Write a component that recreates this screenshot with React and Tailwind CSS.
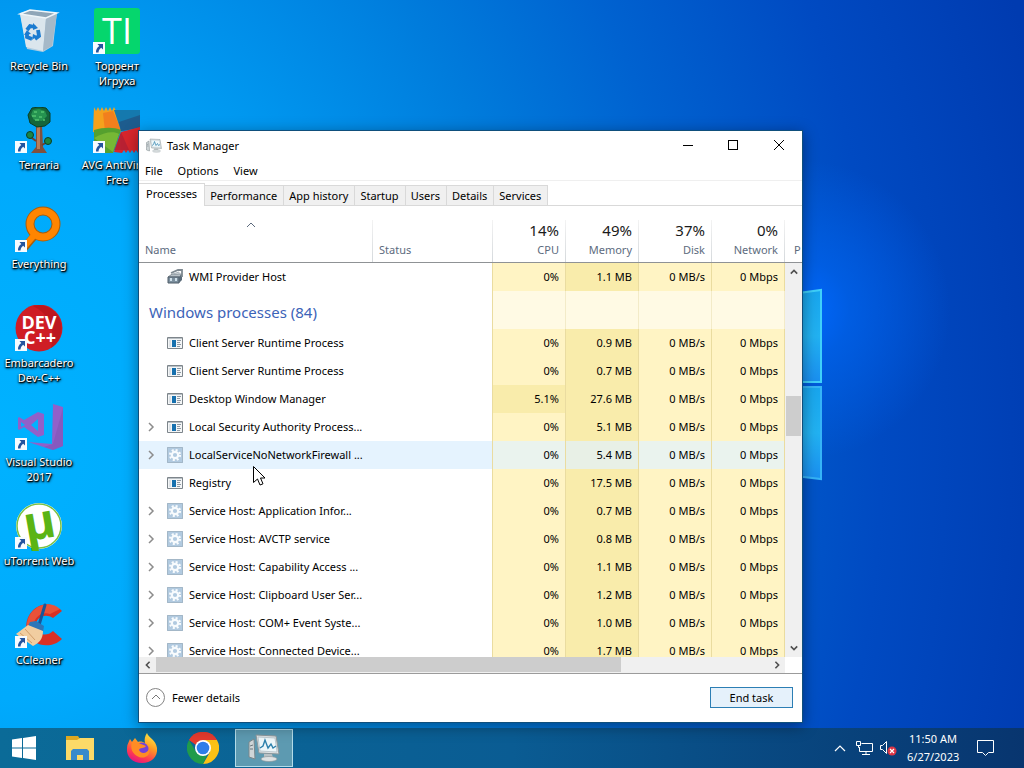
import { useState } from 'react';
import clsx from 'clsx';

const tabs = ['Processes', 'Performance', 'App history', 'Startup', 'Users', 'Details', 'Services'];

const processes = [
  { name: 'Client Server Runtime Process', icon: 'app', cpu: '0%', memory: '0.9 MB' },
  { name: 'Client Server Runtime Process', icon: 'app', cpu: '0%', memory: '0.7 MB' },
  { name: 'Desktop Window Manager', icon: 'app', cpu: '5.1%', memory: '27.6 MB', busy: true },
  { name: 'Local Security Authority Process...', icon: 'app', cpu: '0%', memory: '5.1 MB', group: true },
  { name: 'LocalServiceNoNetworkFirewall ...', icon: 'gear', cpu: '0%', memory: '5.4 MB', group: true, active: true },
  { name: 'Registry', icon: 'app', cpu: '0%', memory: '17.5 MB' },
  { name: 'Service Host: Application Infor...', icon: 'gear', cpu: '0%', memory: '0.7 MB', group: true },
  { name: 'Service Host: AVCTP service', icon: 'gear', cpu: '0%', memory: '0.8 MB', group: true },
  { name: 'Service Host: Capability Access ...', icon: 'gear', cpu: '0%', memory: '1.1 MB', group: true },
  { name: 'Service Host: Clipboard User Ser...', icon: 'gear', cpu: '0%', memory: '1.2 MB', group: true },
  { name: 'Service Host: COM+ Event Syste...', icon: 'gear', cpu: '0%', memory: '1.0 MB', group: true },
  { name: 'Service Host: Connected Device...', icon: 'gear', cpu: '0%', memory: '1.7 MB', group: true },
];

const usage = [
  { label: 'CPU', value: '14%' },
  { label: 'Memory', value: '49%' },
  { label: 'Disk', value: '37%' },
  { label: 'Network', value: '0%' },
];

/* ---------- small glyphs ---------- */

const Chevron = ({ d, className, width = 2 }) => (
  <svg viewBox="0 0 10 10" className={className} fill="none" stroke="currentColor" strokeWidth={width}>
    <path d={d} />
  </svg>
);

const UP = 'M1 7 5 3l4 4';
const DOWN = 'M1 3l4 4 4-4';
const LEFT = 'M7 1 3 5l4 4';
const RIGHT = 'M3 1l4 4-4 4';

const AppIcon = () => (
  <svg viewBox="0 0 16 12" className="h-3 w-4 shrink-0">
    <path d="M.5.5h15v11H.5z" fill="#f4f6f7" stroke="#7d858b" />
    <path d="M1 1h14v1H1z" fill="#b9c0c5" />
    <path d="M5 3h4v7H5z" fill="#1670ae" />
    <path d="M2 3h2v7H2z" fill="#dde2e6" />
    <path d="M10 3.500h4M10 5.500h3M10 7.500h4M10 9.500h3" stroke="#8e99a3" />
  </svg>
);

const GearIcon = () => (
  <svg viewBox="0 0 16 16" className="size-4 shrink-0">
    <path d="M0 0h16v16H0z" fill="#b1cae0" />
    <path d="M.5.5h15v15H.5z" fill="none" stroke="#a3b7c7" />
    <circle cx="8" cy="8" r="5" fill="none" stroke="#f8fbfd" strokeWidth="2.2" strokeDasharray="2 1.93" />
    <circle cx="8" cy="8" r="3.2" fill="#b1cae0" stroke="#f8fbfd" strokeWidth="2.2" />
  </svg>
);

const WmiIcon = () => (
  <svg viewBox="0 0 16 16" className="size-4 shrink-0">
    <path d="M1 8 5 5h10l-3 3z" fill="#b7c0c6" stroke="#66717a" strokeWidth=".7" />
    <path d="M1 8h11v6H1z" fill="#7c8f9e" stroke="#4f5d69" />
    <path d="M12 8l3-3v6l-3 3z" fill="#596a78" />
    <path d="M4 4 11 1h4v7" fill="none" stroke="#7e8991" strokeWidth="1.800" />
    <path d="M6 5l6-2v3" fill="none" stroke="#a9b4bc" />
    <path d="M3 9h2v3H3zM8 9h2v3H8z" fill="#cfe0ea" />
  </svg>
);

const MonitorIcon = ({ className }) => (
  <svg viewBox="0 0 32 28" className={className}>
    <path d="M1 8l5-3 1 20-6-2z" fill="#cfd6d8" stroke="#7b878b" />
    <path d="M2 12l3-1M2 15h3" stroke="#6b777c" />
    <path d="M16 20h8l1 4h-9z" fill="#b9c2c5" />
    <ellipse cx="21" cy="25" rx="8" ry="2.5" fill="#dde2e3" stroke="#8f999d" strokeWidth=".7" />
    <path d="M8 1 28 2l3 18-20-1z" fill="#dfe3e4" stroke="#8b979b" />
    <path d="M10 3l17 1 2 14-17-1z" fill="#edf7fa" stroke="#9fb0b8" strokeWidth=".6" />
    <path d="M12 14l3-2 2-6 3 8 3-4 2 4 3-2" fill="none" stroke="#2c80ac" strokeWidth="1.4" />
  </svg>
);

const ShortcutArrow = () => (
  <svg viewBox="0 0 12 12" className="absolute bottom-[2px] left-0 size-3">
    <path d="M0 0h12v12H0z" fill="#f7fbff" />
    <path d="M4.500 2H10v5.500L8.200 5.800C6.500 7 5.700 8.300 5.500 10.500H3C2.700 8 4 5.300 6.300 3.900z" fill="#24549f" />
  </svg>
);

/* ---------- desktop icon drawings ---------- */

const RecycleBin = () => (
  <svg viewBox="0 0 48 48" className="size-12">
    <path d="M5 5 15 2l27 3-4 33-10 6-16-3z" fill="#c3d3df" opacity=".9" />
    <path d="M5 6l26 4-3 33-17-4z" fill="#dbe6ed" />
    <path d="M31 10 42 5l-5 33-9 5z" fill="#a6b9c8" />
    <path d="M5 6 15 2l27 3-11 5z" fill="#8fa6b8" stroke="#eef5f9" strokeWidth="1.5" />
    <g fill="none" stroke="#1b7bd0" strokeWidth="3.800">
      <path d="M12 22l3-4 5 1" />
      <path d="M23 22l1 6-4 3" />
      <path d="M17 31l-5-2 0-4" />
    </g>
    <path d="M18 15l5 5-5 2zM22 28l-5 4 1-6zM9 27l3-5 4 4z" fill="#1b7bd0" />
  </svg>
);

const TorrentIcon = () => (
  <svg viewBox="0 0 48 48" className="size-12">
    <rect x="1" width="46" height="46" rx="3" fill="#05d66d" />
    <text x="24" y="36" textAnchor="middle" fontFamily="Open Sans" fontSize="36" fill="#fff">TI</text>
  </svg>
);

const TerrariaIcon = () => (
  <svg viewBox="0 0 48 48" className="size-12">
    <path d="M21 18h6l1 22 4 6H16l5-6z" fill="#81503c" />
    <path d="M22 20h3v22h-3z" fill="#b87d5a" />
    <path d="M21 34l-8-6M27 38l7-4" stroke="#6b4030" strokeWidth="2" />
    <path d="M17 1l7-1 7 1 4 5v9l-5 4-8 1-7-4-2-8z" fill="#14663a" stroke="#0b3e24" />
    <path d="M18 3l6-1 6 2 2 5-5 5-8-1-3-5z" fill="#259350" />
    <path d="M19 5h3M26 5h3M17 9h4M24 10h3M20 13h4M28 13h2" stroke="#52c46f" strokeWidth="1.500" />
    <circle cx="15" cy="28" r="3.500" fill="#1b8445" stroke="#0b3e24" />
    <circle cx="33" cy="34" r="3.500" fill="#1b8445" stroke="#0b3e24" />
  </svg>
);

const AvgIcon = () => (
  <svg viewBox="0 0 48 48" className="size-12">
    <path d="M1 0l2 4 2-4 2 4 2-4 2 4 2-4 2 4 2-4 2 4 2-4 2 4 7 19-9 5-21-3z" fill="#f4a11d" />
    <path d="M10 6l10-2 8 19-16 2z" fill="#f0641e" opacity=".55" />
    <path d="M1 23c10-3 20-3 27 0l-8 23H1z" fill="#55a02e" />
    <path d="M1 31c10-6 20-7 25-4l-6 18z" fill="#8cc63a" opacity=".6" />
    <path d="M21 3h26v18l-19 3z" fill="#1579ae" />
    <path d="M26 15 47 8v13l-19 3z" fill="#1d5c8e" />
    <path d="M28 25l19-5v23l-2 3-2-3-2 3-2-3-2 3-2-3-2 3-2-3-2 3-8-1z" fill="#d8262c" />
    <path d="M28 25l8 18H21z" fill="#a51e38" opacity=".6" />
  </svg>
);

const EverythingIcon = () => (
  <svg viewBox="0 0 48 48" className="size-12">
    <path d="M21 28 9 42" stroke="#a95d0b" strokeWidth="8" />
    <circle cx="28" cy="18" r="13" fill="none" stroke="#a95d0b" strokeWidth="9" />
    <path d="M21 27 9 41" stroke="#ff8500" strokeWidth="6" />
    <circle cx="28" cy="18" r="13" fill="none" stroke="#ff8500" strokeWidth="7" />
  </svg>
);

const DevCppIcon = () => (
  <svg viewBox="0 0 48 48" className="size-12">
    <circle cx="24" cy="23" r="23.500" fill="#cf1d25" />
    <path d="M24 0a23.500 23.500 0 0 1 12 43C40 25 36 10 18 1z" fill="#a91118" opacity=".5" />
    <g fill="#fff" fontFamily="Open Sans" fontWeight="700" fontSize="18" textAnchor="middle">
      <text x="24" y="24">DEV</text>
      <text x="25" y="39">C++</text>
    </g>
  </svg>
);

const VisualStudioIcon = () => (
  <svg viewBox="0 0 48 48" className="size-12">
    <path d="M38 0l10 3v39l-10 4-25-8 24 2z" fill="#9160c9" />
    <path d="M38 40l10-36v38l-10 4-9-3z" fill="#7d51b4" opacity=".5" />
    <path d="M4 13l5 3 14-8 6 2v21l-6 2-14-10-5 3-1-1V14zM23 15l-7 6 7 6zM6 18v5l4-2z" fill="#9160c9" fillRule="evenodd" />
  </svg>
);

const UTorrentIcon = () => (
  <svg viewBox="0 0 48 48" className="size-12">
    <circle cx="24" cy="23" r="23" fill="#fff" />
    <circle cx="24" cy="23" r="22" fill="none" stroke="#79c143" strokeWidth="1.500" />
    <text x="25" y="36" textAnchor="middle" fontFamily="Open Sans" fontWeight="700" fontSize="48" fill="#5bb414" transform="rotate(-10 24 24)">µ</text>
  </svg>
);

const CCleanerIcon = () => (
  <svg viewBox="0 0 48 48" className="size-12">
    <path d="M47 9 38 16c-9-6-19 1-17 10 2 7 11 9 17 3l9 8c-11 11-31 7-35-7C7 10 30-8 47 9z" fill="#d93025" />
    <path d="M45 7 35 12c-10-3-17 5-16 13l-7 2C10 8 31-5 45 7z" fill="#ef6142" opacity=".7" />
    <path d="M30 3 24 23" stroke="#17559a" strokeWidth="3" strokeLinecap="round" />
    <path d="M15 20l6-1 8 5-1 6-15-6z" fill="#2d76b8" />
    <path d="M13 23l15 6c0 8-4 12-10 15L1 32z" fill="#f1cda0" />
    <path d="M5 31l12 10M10 27l10 11" stroke="#d19d6a" />
  </svg>
);

const shortcuts = [
  { label: 'Recycle Bin', Icon: RecycleBin, plain: true },
  { label: 'Торрент Игруха', Icon: TorrentIcon },
  { label: 'Terraria', Icon: TerrariaIcon },
  { label: 'AVG AntiVirus Free', Icon: AvgIcon },
  { label: 'Everything', Icon: EverythingIcon },
  null,
  { label: 'Embarcadero Dev-C++', Icon: DevCppIcon },
  null,
  { label: 'Visual Studio 2017', Icon: VisualStudioIcon },
  null,
  { label: 'uTorrent Web', Icon: UTorrentIcon },
  null,
  { label: 'CCleaner', Icon: CCleanerIcon },
];

const DesktopIcons = () => (
  <div className="grid w-fit auto-rows-[99px] grid-cols-[78px_78px] pt-2">
    {shortcuts.map((item, i) =>
      item ? (
        <button key={item.label} className="flex flex-col items-center">
          <span className="relative">
            <item.Icon />
            {!item.plain && <ShortcutArrow />}
          </span>
          <span className="mt-[2px] w-[76px] text-center text-white [text-shadow:1px_1px_1px_#000,0_1px_2px_#000,1px_1px_3px_#000]">
            {item.label}
          </span>
        </button>
      ) : (
        <span key={i} />
      )
    )}
  </div>
);

/* Windows logo panes that stick out behind the window */
const Wallpaper = () => (
  <svg viewBox="0 0 60 200" className="absolute left-[762px] top-[285px] h-[200px] w-[60px]">
    <defs>
      <linearGradient id="pane" x1="0" y1="0" x2="0" y2="1">
        <stop offset="0" stopColor="#18a6ee" />
        <stop offset=".5" stopColor="#22b2f2" />
        <stop offset="1" stopColor="#1a8ff0" />
      </linearGradient>
    </defs>
    <path d="M0 13 59 5v92H0z" fill="url(#pane)" stroke="#3fd0fa" strokeWidth="2" />
    <path d="M0 102h59v92L0 187z" fill="url(#pane)" stroke="#35b4f7" strokeWidth="2" />
  </svg>
);

/* ---------- task manager ---------- */

const Cells = ({ row }) => (
  <>
    <td className={clsx('border-r border-[#eadca0] pb-[2px] pr-[6px]', row.active ? 'bg-[#eaf3ee]' : row.busy ? 'bg-[#f9ecab]' : 'bg-[#fff4c4]')}>
      {row.cpu}
    </td>
    <td className={clsx('border-r border-[#eadca0] pb-[2px] pr-[6px]', row.active ? 'bg-[#e8f0e6]' : 'bg-[#f9ecab]')}>
      {row.memory}
    </td>
    <td className={clsx('border-r border-[#eadca0] pb-[2px] pr-[6px]', row.active ? 'bg-[#eaf3ee]' : 'bg-[#fff4c4]')}>
      0 MB/s
    </td>
    <td className={clsx('border-r border-[#eadca0] pb-[2px] pr-[6px]', row.active ? 'bg-[#eaf3ee]' : 'bg-[#fff4c4]')}>
      0 Mbps
    </td>
    <td />
  </>
);

const ProcessRow = ({ row }) => (
  <tr className="h-7 text-right">
    <td colSpan={2} className={clsx('border-r border-[#eadca0] text-left', row.active && 'bg-[#e5f3fe]')}>
      <div className="flex items-center">
        <span className="flex w-7 shrink-0 pl-[7px]">
          {row.group && (
            <button aria-label={`Expand ${row.name}`}>
              <Chevron d={RIGHT} className="size-[10px] text-[#8c8c8c]" width={1.5} />
            </button>
          )}
        </span>
        {row.icon === 'app' && <AppIcon />}
        {row.icon === 'gear' && <GearIcon />}
        {row.icon === 'wmi' && <WmiIcon />}
        <span className="ml-[6px] whitespace-nowrap pb-[2px]">{row.name}</span>
      </div>
    </td>
    <Cells row={row} />
  </tr>
);

const ProcessTable = () => (
  <div className="relative min-h-0 flex-1 overflow-hidden">
    <table className="w-full table-fixed border-separate border-spacing-0">
      <colgroup>
        <col />
        <col className="w-[120px]" />
        <col className="w-[73px]" />
        <col className="w-[73px]" />
        <col className="w-[73px]" />
        <col className="w-[73px]" />
        <col className="w-[17px]" />
      </colgroup>
      <thead>
        <tr className="h-[57px] text-[#5d6b7e]">
          <th className="border-b border-[#8f9295] bg-linear-to-t from-[#d5d9dc] to-[#f3f3f3] bg-[length:1px_42px] bg-right-bottom bg-no-repeat p-0 align-bottom font-normal">
            <button className="flex w-full flex-col text-left">
              <Chevron d={UP} className="ml-[107px] size-[10px]" width={1} />
              <span className="mt-3 pb-[5px] pl-[6px]">Name</span>
            </button>
          </th>
          <th className="border-b border-[#8f9295] bg-linear-to-t from-[#d5d9dc] to-[#f3f3f3] bg-[length:1px_42px] bg-right-bottom bg-no-repeat pb-[5px] pl-[6px] text-left align-bottom font-normal">
            Status
          </th>
          {usage.map((col) => (
            <th
              key={col.label}
              className="border-b border-[#8f9295] bg-linear-to-t from-[#d5d9dc] to-[#f3f3f3] bg-[length:1px_42px] bg-right-bottom bg-no-repeat pb-[5px] pr-[7px] text-right align-bottom font-normal"
            >
              <span className="block text-[15px] leading-5 text-[#1b1b1b]">{col.value}</span>
              <span className="mt-[2px] block">{col.label}</span>
            </th>
          ))}
          <th className="overflow-hidden border-b border-[#8f9295] pb-[5px] pl-[9px] text-left align-bottom font-normal">P</th>
        </tr>
      </thead>
      <tbody>
        <ProcessRow row={{ name: 'WMI Provider Host', icon: 'wmi', cpu: '0%', memory: '1.1 MB' }} />
        <tr className="h-[38px]">
          <th colSpan={2} className="border-r border-[#eadca0] pl-[10px] pt-1 text-left text-[15px] font-normal text-[#3c63b8]">
            Windows processes (84)
          </th>
          <td className="border-r border-[#f3ebc8] bg-[#fffae4]" />
          <td className="border-r border-[#f3ebc8] bg-[#fffae4]" />
          <td className="border-r border-[#f3ebc8] bg-[#fffae4]" />
          <td className="border-r border-[#f3ebc8] bg-[#fffae4]" />
          <td />
        </tr>
        {processes.map((row, i) => (
          <ProcessRow key={i} row={row} />
        ))}
      </tbody>
    </table>

    {/* vertical scrollbar, starts below the header */}
    <div className="absolute bottom-0 right-0 top-[57px] flex w-[17px] flex-col items-center bg-[#f0f0f0] text-[#505050]">
      <button aria-label="Scroll up" className="flex h-[18px] w-full items-center justify-center">
        <Chevron d={UP} className="size-2" />
      </button>
      <div className="flex w-full flex-1 flex-col items-center">
        <span className="h-[32%]" />
        <span className="h-10 w-[15px] bg-[#cdcdcd]" />
      </div>
      <button aria-label="Scroll down" className="flex h-[18px] w-full items-center justify-center">
        <Chevron d={DOWN} className="size-2" />
      </button>
    </div>
  </div>
);

const TaskManager = () => {
  const [tab, setTab] = useState('Processes');

  return (
    <section className="absolute left-[138px] top-[130px] flex h-[593px] w-[665px] flex-col border border-[#0f4f7c] bg-white text-black shadow-[0_3px_14px_rgba(0,0,0,0.4)]">
      <header className="flex h-[30px] shrink-0 items-center pb-[2px] pl-[7px]">
        <MonitorIcon className="h-[15px] w-4" />
        <h1 className="ml-[5px] flex-1">Task Manager</h1>
        <button aria-label="Minimize" className="flex h-full w-[45px] items-center justify-center">
          <span className="h-px w-[10px] bg-black" />
        </button>
        <button aria-label="Maximize" className="flex h-full w-[45px] items-center justify-center">
          <span className="size-[10px] border border-black" />
        </button>
        <button aria-label="Close" className="flex h-full w-[47px] items-center justify-center">
          <Chevron d="M0 0l10 10M10 0 0 10" className="size-[10px]" width={1} />
        </button>
      </header>

      <nav className="flex h-5 shrink-0 items-center gap-[15px] border-b border-[#efefef] pl-[6px]">
        <button>File</button>
        <button>Options</button>
        <button>View</button>
      </nav>

      {/* Tabs */}
      <div role="tablist" className="flex h-[25px] shrink-0 items-end border-b border-[#d9d9d9]">
        {tabs.map((name) => (
          <button
            key={name}
            role="tab"
            aria-selected={tab === name}
            onClick={() => setTab(name)}
            className={clsx(
              'border-r border-t border-[#d9d9d9]',
              tab === name ? '-mb-px h-[23px] bg-white px-[7px] pb-1' : 'h-5 bg-[#f0f0f0] pl-[5px] pr-[6px]'
            )}
          >
            {name}
          </button>
        ))}
      </div>

      <ProcessTable />

      {/* horizontal scrollbar */}
      <div className="mr-[17px] flex h-4 shrink-0 items-center bg-[#f0f0f0] text-[#505050]">
        <button aria-label="Scroll left" className="flex h-full w-[17px] items-center justify-center">
          <Chevron d={LEFT} className="size-2" />
        </button>
        <div className="h-full flex-1">
          <div className="h-[15px] w-[76%] bg-[#cdcdcd]" />
        </div>
        <button aria-label="Scroll right" className="flex h-full w-[17px] items-center justify-center">
          <Chevron d={RIGHT} className="size-2" />
        </button>
      </div>

      <footer className="flex h-[49px] shrink-0 items-center justify-between border-t border-[#9b9b9b] pb-[2px] pl-[7px] pr-[9px]">
        <button className="flex items-center gap-[7px]">
          <span className="flex size-[19px] items-center justify-center rounded-full border border-[#858585] text-[#777]">
            <Chevron d={UP} className="size-[10px]" width={1} />
          </span>
          Fewer details
        </button>
        <button className="h-[21px] w-[83px] border border-[#2c7eb4] bg-[#e5f1fb]">End task</button>
      </footer>
    </section>
  );
};

/* ---------- taskbar ---------- */

const Taskbar = () => (
  <footer className="flex h-10 shrink-0 items-center bg-linear-to-r from-[#0b6b98] via-[#0a5c93] via-50% to-[#08356f] text-white">
    <button aria-label="Start" className="flex h-full w-12 items-center justify-center">
      <svg viewBox="0 0 24 24" className="size-6" fill="#fff">
        <path d="M0 3.500 10 2v9.500H0zM11 1.900 24 0v11.500H11zM0 12.500h10V22L0 20.500zM11 12.500h13V24l-13-1.900z" />
      </svg>
    </button>
    <button aria-label="File Explorer" className="flex h-full w-16 items-center justify-center">
      <svg viewBox="0 0 28 24" className="h-6 w-7">
        <path d="M0 0h12l2 3h14v21H0z" fill="#dda821" />
        <path d="M0 4h11l3-2h14v22H0z" fill="#fbda68" />
        <path d="M5 24V15l2-2h14l2 2v9h-6v-5h-6v5z" fill="#378acb" />
      </svg>
    </button>
    <button aria-label="Firefox" className="flex h-full w-[59px] items-center justify-center">
      <svg viewBox="0 0 32 32" className="size-8">
        <defs>
          <linearGradient id="fox" x1=".8" y1="0" x2=".3" y2="1">
            <stop offset="0" stopColor="#fff04a" />
            <stop offset=".4" stopColor="#ff9c22" />
            <stop offset=".75" stopColor="#ff3c50" />
            <stop offset="1" stopColor="#e11482" />
          </linearGradient>
        </defs>
        <path d="M21 1c1 4 9 7 10 15 1 9-6 15-15 15C7 31 0 25 1 16c0-4 2-6 3-9l2 3 3-4 3 4c3-1 5 0 7 1-1-4 0-7 2-10z" fill="url(#fox)" />
        <circle cx="16" cy="17" r="6.500" fill="#7541d8" />
        <path d="M6 10c4-1 6 1 9 2l5 2c-2 3-6 1-7 4 2 5 9 3 10-1 2 7-5 10-10 8-7-3-9-9-7-15z" fill="#ff8c24" />
      </svg>
    </button>
    <button aria-label="Chrome" className="flex h-full w-16 items-center justify-center">
      <svg viewBox="0 0 32 32" className="size-8">
        <path d="M16 16 2.100 8A16 16 0 0 1 29.900 8z" fill="#e53a2e" />
        <path d="M16 8h13.900A16 16 0 0 1 16 32l7-12z" fill="#fbc116" />
        <path d="M16 32A16 16 0 0 1 2.100 8l7 12 6.900 4 4-1z" fill="#209b4b" />
        <path d="M2.100 8A16 16 0 0 1 29.900 8H16l-7 5z" fill="#e53a2e" />
        <circle cx="16" cy="16" r="8" fill="#fff" />
        <circle cx="16" cy="16" r="6.300" fill="#2d7de9" />
      </svg>
    </button>
    <button aria-label="Task Manager" className="flex h-[38px] w-[58px] items-center justify-center border border-[#b3dce9] bg-[#5d9ab1]">
      <MonitorIcon className="h-7 w-8" />
    </button>

    <div className="ml-auto flex h-full items-center">
      <button aria-label="Show hidden icons" className="mr-[10px]">
        <svg viewBox="0 0 12 8" className="h-2 w-3" fill="none" stroke="#fff" strokeWidth="1.200">
          <path d="M1 7l5-5 5 5" />
        </svg>
      </button>
      <button aria-label="Network" className="mr-[7px]">
        <svg viewBox="0 0 17 14" className="h-[14px] w-[17px]" fill="none" stroke="#fff">
          <path d="M5.500 2.500h11v8H3.500V6M10 10.500v3M6 13.500h8M.5.500h4v4h-4zM2.500 4.500v2h1" />
        </svg>
      </button>
      <button aria-label="Volume muted" className="mr-[10px]">
        <svg viewBox="0 0 17 16" className="h-4 w-[17px]">
          <path d="M.5 5.500h2l4-4v12l-4-4h-2z" fill="none" stroke="#fff" />
          <circle cx="12" cy="11" r="4.500" fill="#dc3545" />
          <path d="M10 9l4 4M14 9l-4 4" stroke="#fff" strokeWidth="1.200" />
        </svg>
      </button>
      <button className="w-[52px] whitespace-nowrap text-center leading-[18px]">
        <span className="block">11:50 AM</span>
        <span className="block">6/27/2023</span>
      </button>
      <button aria-label="Notifications" className="ml-[18px] mr-[30px]">
        <svg viewBox="0 0 17 16" className="h-4 w-[17px]" fill="none" stroke="#fff">
          <path d="M.5.500h16v12h-5l-3 3-3-3h-5z" />
        </svg>
      </button>
    </div>
  </footer>
);

export default function App() {
  return (
    <div className="flex h-screen flex-col overflow-hidden font-['Noto_Sans','Open_Sans',sans-serif] text-[11px] leading-[15px]">
      <main className="relative min-h-0 flex-1 bg-[radial-gradient(circle_at_800px_310px,#0068ff_0,#0064f0aa_50px,transparent_150px),radial-gradient(ellipse_105%_180%_at_0_60%,#00b2ff_0,#00aafc_20%,#0098f0_33%,#007cdc_50%,#0062d0_65%,#004ac2_82%,#003bb0_100%)]">
        <Wallpaper />
        <DesktopIcons />
        <TaskManager />
        {/* mouse pointer */}
        <svg viewBox="0 0 12 20" className="absolute left-[253px] top-[466px] h-5 w-3">
          <path d="M.5.500v16l4-3.500 2.500 6 3-1.200-2.500-5.800h4.500z" fill="#fff" stroke="#000" />
        </svg>
      </main>
      <Taskbar />
    </div>
  );
}
